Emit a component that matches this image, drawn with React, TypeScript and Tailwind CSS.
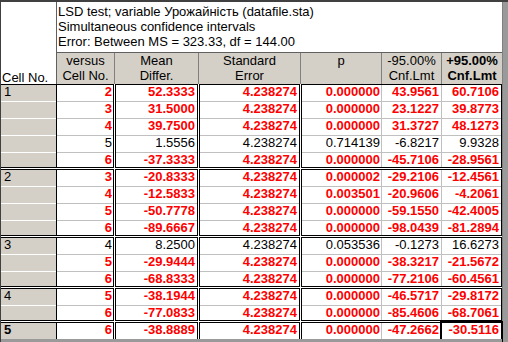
import React from 'react';

type Row = { vs: string; diff: string; p: string; lo: string; hi: string; sig: boolean };
type Group = { cell: string; rows: Row[] };

const SE = '4.238274';

const groups: Group[] = [
  {
    cell: '1',
    rows: [
      { vs: '2', diff: '52.3333', p: '0.000000', lo: '43.9561', hi: '60.7106', sig: true },
      { vs: '3', diff: '31.5000', p: '0.000000', lo: '23.1227', hi: '39.8773', sig: true },
      { vs: '4', diff: '39.7500', p: '0.000000', lo: '31.3727', hi: '48.1273', sig: true },
      { vs: '5', diff: '1.5556', p: '0.714139', lo: '-6.8217', hi: '9.9328', sig: false },
      { vs: '6', diff: '-37.3333', p: '0.000000', lo: '-45.7106', hi: '-28.9561', sig: true },
    ],
  },
  {
    cell: '2',
    rows: [
      { vs: '3', diff: '-20.8333', p: '0.000002', lo: '-29.2106', hi: '-12.4561', sig: true },
      { vs: '4', diff: '-12.5833', p: '0.003501', lo: '-20.9606', hi: '-4.2061', sig: true },
      { vs: '5', diff: '-50.7778', p: '0.000000', lo: '-59.1550', hi: '-42.4005', sig: true },
      { vs: '6', diff: '-89.6667', p: '0.000000', lo: '-98.0439', hi: '-81.2894', sig: true },
    ],
  },
  {
    cell: '3',
    rows: [
      { vs: '4', diff: '8.2500', p: '0.053536', lo: '-0.1273', hi: '16.6273', sig: false },
      { vs: '5', diff: '-29.9444', p: '0.000000', lo: '-38.3217', hi: '-21.5672', sig: true },
      { vs: '6', diff: '-68.8333', p: '0.000000', lo: '-77.2106', hi: '-60.4561', sig: true },
    ],
  },
  {
    cell: '4',
    rows: [
      { vs: '5', diff: '-38.1944', p: '0.000000', lo: '-46.5717', hi: '-29.8172', sig: true },
      { vs: '6', diff: '-77.0833', p: '0.000000', lo: '-85.4606', hi: '-68.7061', sig: true },
    ],
  },
  {
    cell: '5',
    rows: [{ vs: '6', diff: '-38.8889', p: '0.000000', lo: '-47.2662', hi: '-30.5116', sig: true }],
  },
];

// row height: 16px + gray line, last row of a group is 14px (the double line eats the rest)
const rowCls = (last: boolean, lastGroup: boolean) =>
  last ? (lastGroup ? 'h-[16px]' : 'h-[14px]') : 'h-[17px] border-b border-[#c0c0c0]';

const txt = (sig: boolean) => (sig ? 'text-[#ff0000] font-bold' : 'text-black');

function GroupBlock({ g, lastGroup }: { g: Group; lastGroup: boolean }) {
  const n = g.rows.length;
  const box = `border-t border-x border-black ${lastGroup ? '' : 'border-b'}`;
  return (
    <div className={`flex ${lastGroup ? '' : 'mb-px'}`}>
      {/* row headers */}
      <div className={`w-[55px] border-t border-black ${lastGroup ? '' : 'border-b'} bg-[#d4d0c8]`}>
        {g.rows.map((r, i) => (
          <div
            key={i}
            className={`${i === n - 1 ? (lastGroup ? 'h-[16px]' : 'h-[14px]') : 'h-[17px] border-b border-white'} pl-[3px] leading-[14px] ${
              lastGroup ? 'font-bold' : ''
            }`}
          >
            {i === 0 ? g.cell : ''}
          </div>
        ))}
      </div>
      {/* versus */}
      <div className={`w-[58px] ${box} bg-white`}>
        {g.rows.map((r, i) => (
          <div key={i} className={`${rowCls(i === n - 1, lastGroup)} text-right pr-[1px] leading-[14px] ${txt(r.sig)}`}>
            {r.vs}
          </div>
        ))}
      </div>
      {/* mean diff */}
      <div className={`w-[83px] ml-px ${box} bg-white`}>
        {g.rows.map((r, i) => (
          <div key={i} className={`${rowCls(i === n - 1, lastGroup)} text-right pr-[2px] leading-[14px] ${txt(r.sig)}`}>
            {r.diff}
          </div>
        ))}
      </div>
      {/* std error */}
      <div className={`w-[101px] ml-px ${box} bg-white`}>
        {g.rows.map((r, i) => (
          <div key={i} className={`${rowCls(i === n - 1, lastGroup)} text-right pr-[2px] leading-[14px] ${txt(r.sig)}`}>
            {SE}
          </div>
        ))}
      </div>
      {/* p, -95, +95 */}
      <div className={`w-[201px] ml-px ${box} bg-white`}>
        {g.rows.map((r, i) => (
          <div key={i} className={`${rowCls(i === n - 1, lastGroup)} flex leading-[14px] ${txt(r.sig)}`}>
            <div className="w-[80px] border-r border-[#c0c0c0] text-right pr-[1px]">{r.p}</div>
            <div className="w-[60px] border-r border-[#c0c0c0] text-right pr-[2px]">{r.lo}</div>
            <div className="relative flex-1 text-right pr-[2px]">
              {r.hi}
              {lastGroup && (
                <div className="absolute -left-[2px] -top-[2px] -right-[2px] -bottom-[6px] border-2 border-black" />
              )}
            </div>
          </div>
        ))}
      </div>
    </div>
  );
}

export default function App() {
  return (
    <div className="w-[508px] h-[342px] overflow-hidden bg-white border-l border-t-2 border-[#404040] flex font-['Liberation_Sans',Arial,sans-serif] text-[13px] text-black">
      <div className="w-[501px] flex flex-col">
        {/* title + column headers */}
        <div className="flex h-[82px]">
          <div className="w-[55px] flex items-end pl-px leading-[13px]">Cell No.</div>
          <div className="flex-1 border-l border-[#606060] flex flex-col">
            <div className="h-[50px] pl-px pt-[2px] leading-[15px]">
              <div>LSD test; variable Урожайність (datafile.sta)</div>
              <div>Simultaneous confidence intervals</div>
              <div>Error: Between MS = 323.33, df = 144.00</div>
            </div>
            <div className="h-[32px] border-t border-[#606060] flex bg-[#d4d0c8] leading-[15px] text-center">
              <div className="w-[58px] border-r border-[#808080]">
                <div>versus</div>
                <div>Cell No.</div>
              </div>
              <div className="w-[84px] border-r border-[#808080]">
                <div>Mean</div>
                <div>Differ.</div>
              </div>
              <div className="w-[102px] border-r border-[#808080]">
                <div>Standard</div>
                <div>Error</div>
              </div>
              <div className="w-[81px] border-r border-[#808080]">
                <div>p</div>
              </div>
              <div className="w-[60px] border-r border-[#808080]">
                <div>-95.00%</div>
                <div>Cnf.Lmt</div>
              </div>
              <div className="flex-1 font-bold">
                <div>+95.00%</div>
                <div>Cnf.Lmt</div>
              </div>
            </div>
          </div>
        </div>

        {groups.map((g, i) => (
          <GroupBlock key={g.cell} g={g} lastGroup={i === groups.length - 1} />
        ))}

        <div className="relative z-10 mt-auto h-[3px] bg-[#9a9a9a]" />
      </div>
      <div className="w-[6px] bg-[#9a9a9a] border-l border-[#808080]" />
    </div>
  );
}
